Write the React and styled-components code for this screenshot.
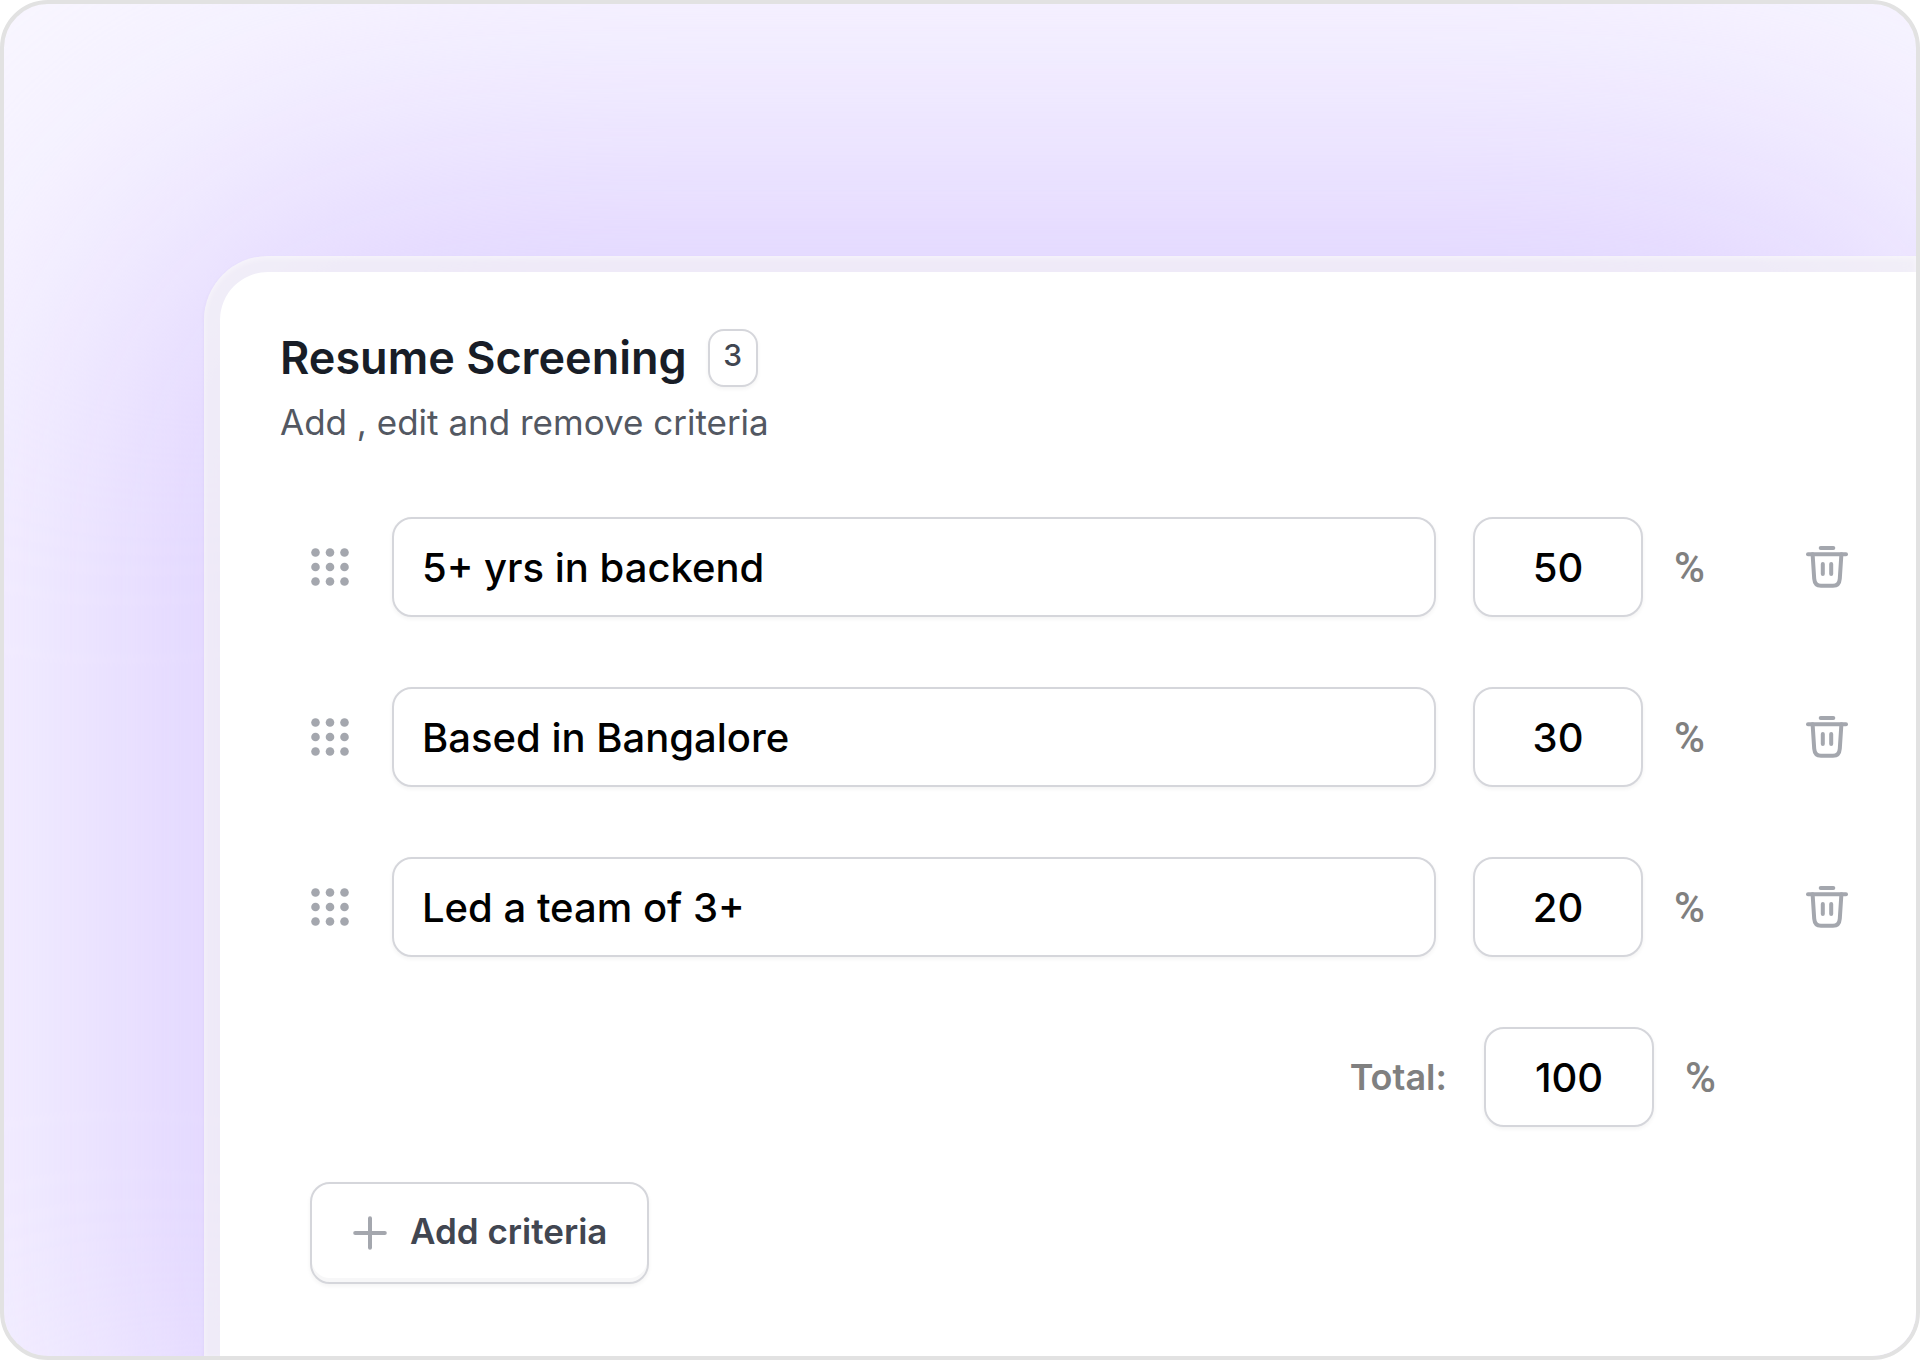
import { useState } from "react";

import styled, { createGlobalStyle, css } from "styled-components";

const GlobalStyle = createGlobalStyle`
  * {
    box-sizing: border-box;
  }
  body {
    margin: 0;
    background: #ffffff;
    font-family: Inter, "Liberation Sans", sans-serif;
  }
`;

const Frame = styled.main`
  position: relative;
  z-index: 0;
  display: flex;
  min-height: 100vh;
  padding: 252px 0 0 200px;
  border: 4px solid #e2e2e2;
  border-radius: 48px;
  background: #f9f7ff;
  overflow: hidden;
`;

const Glow = styled.div`
  position: absolute;
  z-index: -1;
  inset: 155px -90px -260px 90px;
  border-radius: 260px;
  background: #ddcfff;
  filter: blur(170px);
`;

const Halo = styled.div`
  display: flex;
  flex: 1;
  min-width: 0;
  padding: 16px 0 0 16px;
  border-radius: 64px 0 0 0;
  background: rgba(245, 245, 244, 0.6);
  box-shadow:
    inset 0 2px 6px rgba(255, 255, 255, 0.5),
    0 2px 4px rgba(80, 60, 140, 0.06);
`;

const Card = styled.section`
  flex: 1;
  min-width: 0;
  padding: 56px 68px 70px 60px;
  border-radius: 48px 0 0 0;
  background: #ffffff;
`;

const TitleRow = styled.div`
  display: flex;
  align-items: center;
  gap: 21px;
`;

const Title = styled.h1`
  margin: 0;
  color: #181d27;
  font-size: 45px;
  font-weight: 600;
  line-height: 60px;
`;

const outlined = css`
  border: 2px solid #d5d6db;
  border-radius: 20px;
  background: #ffffff;
  box-shadow: 0 2px 4px rgba(10, 13, 18, 0.05);
`;

const Badge = styled.span`
  ${outlined}
  width: 50px;
  height: 58px;
  border-radius: 16px;
  color: #414651;
  font-size: 30px;
  font-weight: 500;
  line-height: 48px;
  text-align: center;
`;

const Subtitle = styled.p`
  margin: 10px 0 0;
  color: #535862;
  font-size: 35px;
  line-height: 48px;
`;

const CriteriaList = styled.ul`
  display: flex;
  flex-direction: column;
  gap: 70px;
  margin: 71px 0 0;
  padding: 0 0 0 30px;
  list-style: none;
`;

const CriteriaRow = styled.li`
  display: flex;
  align-items: center;
`;

const IconButton = styled.button`
  display: flex;
  flex: none;
  padding: 0;
  border: 0;
  background: none;
  color: #a4a7ae;
  cursor: ${(props) => props.$cursor || "pointer"};
`;

const field = css`
  ${outlined}
  height: 100px;
  color: #000000;
  font-family: inherit;
  font-size: 40px;
  font-weight: 500;
`;

const NameInput = styled.input`
  ${field}
  flex: 1;
  min-width: 0;
  margin: 0 37px 0 42px;
  padding: 0 28px;
`;

const WeightInput = styled.input`
  ${field}
  flex: none;
  width: 170px;
  padding: 0;
  text-align: center;
`;

const Percent = styled.span`
  flex: none;
  width: 163px;
  padding-left: 31px;
  color: #808080;
  font-family: Roboto, sans-serif;
  font-size: 42px;
  font-weight: 500;
`;

const TotalRow = styled.div`
  display: flex;
  align-items: center;
  justify-content: flex-end;
  margin: 70px 31px 0 0;
`;

const TotalLabel = styled.label`
  margin-right: 37px;
  color: #808080;
  font-size: 36px;
  font-weight: 600;
`;

const AddButton = styled.button`
  ${outlined}
  display: flex;
  align-items: center;
  gap: 22px;
  height: 102px;
  margin: 55px 0 0 30px;
  padding: 0 40px;
  box-shadow:
    0 2px 4px rgba(10, 13, 18, 0.05),
    inset 0 -4px 0 rgba(10, 13, 18, 0.03);
  color: #414651;
  font-family: inherit;
  font-size: 35px;
  font-weight: 600;
  line-height: 48px;
  cursor: pointer;
`;

const AddText = styled.span`
  padding-bottom: 4px;
`;

const DOTS = [5.5, 20, 34.5];

const DragIcon = () => (
  <svg width="40" height="40" viewBox="0 0 40 40" fill="currentColor">
    {DOTS.map((y) =>
      DOTS.map((x) => <circle key={`${x}-${y}`} cx={x} cy={y} r="4.3" />)
    )}
  </svg>
);

const TrashIcon = () => (
  <svg
    width="42"
    height="42"
    viewBox="0 0 42 42"
    fill="none"
    stroke="currentColor"
    strokeWidth="4"
    strokeLinecap="round"
    strokeLinejoin="round"
  >
    <path d="M14.7 2H27.3" />
    <path d="M2 8.2H40" />
    <path d="M6.6 8.2L8.2 32.6Q8.7 39.8 15 39.8H27Q33.3 39.8 33.8 32.6L35.4 8.2" />
    <path d="M16.8 18V28M25.2 18V28" />
  </svg>
);

const PlusIcon = () => (
  <svg
    width="36"
    height="36"
    viewBox="0 0 36 36"
    fill="none"
    stroke="#a4a7ae"
    strokeWidth="4"
    strokeLinecap="round"
  >
    <path d="M18 3.2V32.8M3.2 18H32.8" />
  </svg>
);

const INITIAL_CRITERIA = [
  { id: 1, name: "5+ yrs in backend", weight: "50" },
  { id: 2, name: "Based in Bangalore", weight: "30" },
  { id: 3, name: "Led a team of 3+", weight: "20" },
];

const App = () => {
  const [criteria, setCriteria] = useState(INITIAL_CRITERIA);

  const total = criteria.reduce((sum, item) => sum + Number(item.weight), 0);

  const updateItem = (id, changes) =>
    setCriteria(
      criteria.map((item) => (item.id === id ? { ...item, ...changes } : item))
    );

  const removeItem = (id) =>
    setCriteria(criteria.filter((item) => item.id !== id));

  const addItem = () =>
    setCriteria([...criteria, { id: Date.now(), name: "", weight: "0" }]);

  return (
    <>
      <GlobalStyle />
      <Frame>
        <Glow />
        <Halo>
          <Card>
            <TitleRow>
              <Title>Resume Screening</Title>
              <Badge>{criteria.length}</Badge>
            </TitleRow>
            <Subtitle>Add , edit and remove criteria</Subtitle>

            <CriteriaList>
              {criteria.map((item) => (
                <CriteriaRow key={item.id}>
                  <IconButton type="button" aria-label="Reorder" $cursor="grab">
                    <DragIcon />
                  </IconButton>
                  <NameInput
                    aria-label="Criteria"
                    value={item.name}
                    onChange={(e) =>
                      updateItem(item.id, { name: e.target.value })
                    }
                  />
                  <WeightInput
                    aria-label="Weight"
                    inputMode="numeric"
                    value={item.weight}
                    onChange={(e) =>
                      updateItem(item.id, { weight: e.target.value })
                    }
                  />
                  <Percent>%</Percent>
                  <IconButton
                    type="button"
                    aria-label="Remove"
                    onClick={() => removeItem(item.id)}
                  >
                    <TrashIcon />
                  </IconButton>
                </CriteriaRow>
              ))}
            </CriteriaList>

            <TotalRow>
              <TotalLabel htmlFor="total">Total:</TotalLabel>
              <WeightInput id="total" value={total} readOnly />
              <Percent>%</Percent>
            </TotalRow>

            <AddButton type="button" onClick={addItem}>
              <PlusIcon />
              <AddText>Add criteria</AddText>
            </AddButton>
          </Card>
        </Halo>
      </Frame>
    </>
  );
};

export default App;
